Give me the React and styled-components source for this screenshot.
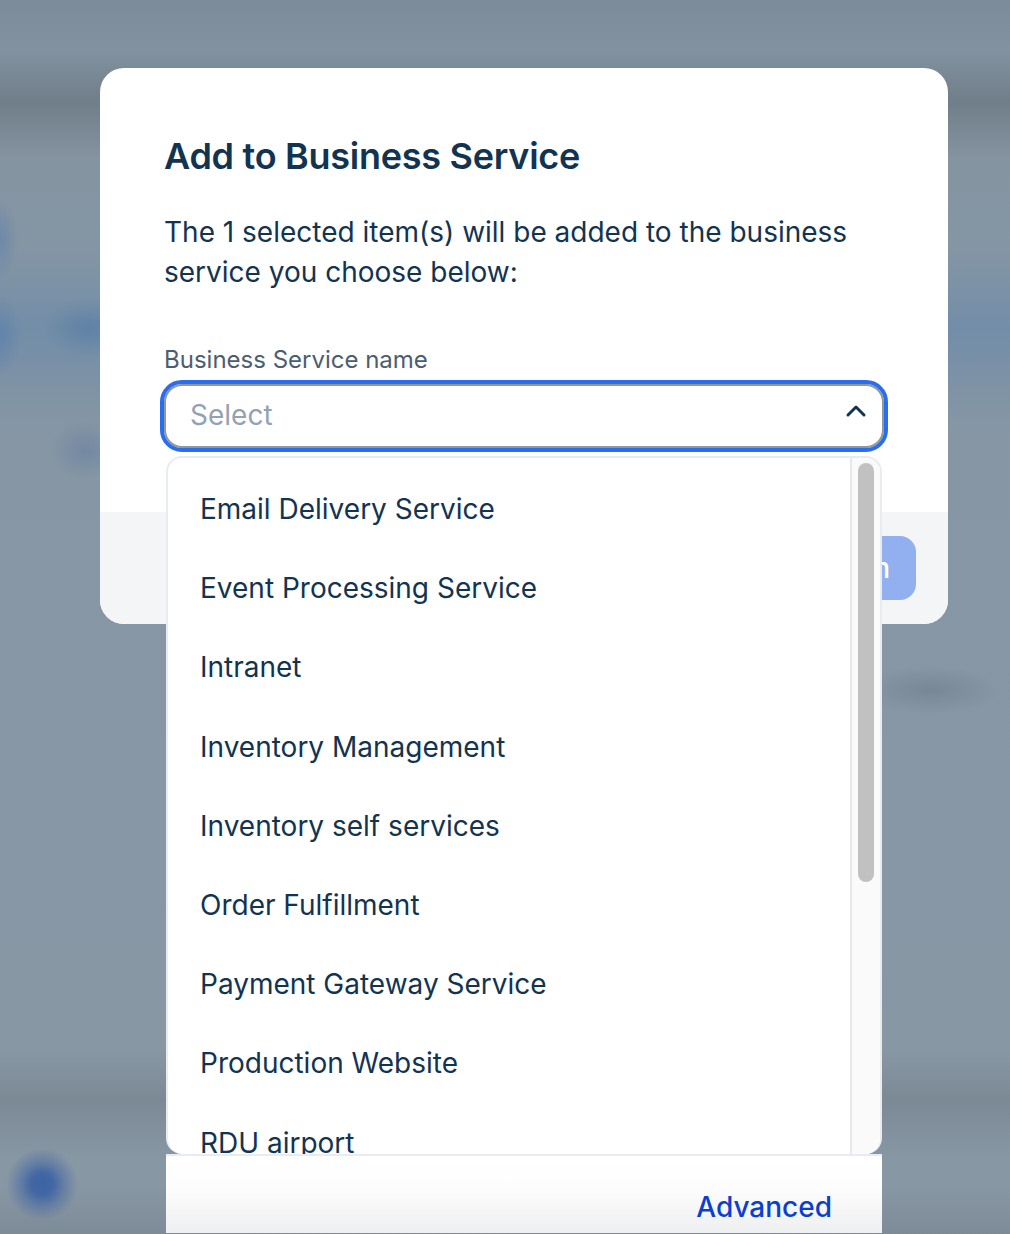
import React from 'react';
import styled, { createGlobalStyle } from 'styled-components';

const GlobalStyle = createGlobalStyle`
    html, body {
        margin: 0;
        padding: 0;
        font-family: 'Inter', 'Liberation Sans', sans-serif;
    }
`;

const Backdrop = styled.div`
    position: relative;
    width: 1010px;
    height: 1234px;
    padding-top: 68px;
    box-sizing: border-box;
    overflow: hidden;
    background-color: #8897a4;
    background-image:
        radial-gradient(circle 36px at 42px 1184px, rgba(61, 99, 163, 1) 0%, rgba(61, 99, 163, 0.92) 30%, rgba(61, 99, 163, 0.45) 62%, rgba(61, 99, 163, 0) 100%),
        radial-gradient(ellipse 70px 24px at 930px 690px, rgba(105, 120, 135, 0.5), rgba(105, 120, 135, 0)),
        radial-gradient(ellipse 44px 30px at 88px 328px, rgba(80, 120, 165, 0.55), rgba(80, 120, 165, 0)),
        radial-gradient(ellipse 36px 30px at 85px 450px, rgba(85, 115, 160, 0.4), rgba(85, 115, 160, 0)),
        radial-gradient(ellipse 18px 40px at 0px 240px, rgba(80, 120, 175, 0.45), rgba(80, 120, 175, 0)),
        radial-gradient(ellipse 22px 40px at 0px 335px, rgba(80, 120, 175, 0.5), rgba(80, 120, 175, 0)),
        linear-gradient(180deg,
            rgba(112, 130, 145, 0.55) 0,
            rgba(112, 130, 145, 0.25) 50px,
            rgba(105, 120, 130, 0.8) 102px,
            rgba(115, 130, 140, 0.15) 160px,
            rgba(100, 135, 170, 0.1) 250px,
            rgba(100, 135, 170, 0.6) 330px,
            rgba(100, 135, 170, 0.05) 430px,
            rgba(115, 130, 140, 0) 1050px,
            rgba(115, 130, 140, 0.65) 1100px,
            rgba(115, 130, 140, 0) 1160px,
            rgba(115, 130, 140, 0) 1185px,
            rgba(115, 130, 140, 0.55) 1234px);
`;

const Modal = styled.div`
    position: relative;
    width: 848px;
    margin: 0 auto 0 100px;
    border-radius: 24px;
    background: #fff;
`;

const Body = styled.div`
    height: 444px;
    box-sizing: border-box;
    padding: 64px 64px 0;
`;

const Title = styled.h2`
    margin: 0;
    font-size: 36px;
    line-height: 48px;
    font-weight: 600;
    letter-spacing: -0.27px;
    color: #123450;
`;

const Message = styled.p`
    margin: 32px 0 0;
    width: 700px;
    font-size: 28px;
    line-height: 40px;
    color: #123450;
`;

const Field = styled.div`
    position: relative;
    margin-top: 50px;
`;

const Label = styled.div`
    font-size: 24px;
    line-height: 36px;
    color: #4b5e70;
`;

const SelectBox = styled.div`
    display: flex;
    align-items: center;
    justify-content: space-between;
    margin: 2px 0 0 -4px;
    width: 728px;
    height: 72px;
    box-sizing: border-box;
    padding: 0 16px 2px 26px;
    border: 4px solid #2a6ded;
    border-radius: 22px;
    box-shadow: inset 0 0 0 2px #8f979f;
    background: #fff;
`;

const Placeholder = styled.span`
    font-size: 28px;
    color: #93a2b3;
`;

const Dropdown = styled.div`
    position: absolute;
    top: 114px;
    left: 2px;
    width: 716px;
    display: flex;
    flex-direction: column;
`;

const ListFrame = styled.div`
    display: flex;
    height: 698px;
    box-sizing: border-box;
    border: 2px solid #e8ebf0;
    border-bottom: none;
    border-radius: 16px;
    overflow: hidden;
    background: #fff;
`;

const List = styled.ul`
    flex: 1;
    margin: 0;
    padding: 12px 0 0 32px;
    list-style: none;
    overflow: hidden;
`;

const Item = styled.li`
    height: 79.2px;
    line-height: 79px;
    font-size: 28px;
    white-space: nowrap;
    color: #123450;
`;

const Track = styled.div`
    width: 30px;
    box-sizing: border-box;
    padding: 5px 6px 0;
    border-left: 2px solid #e6e8eb;
    background: #fafafa;
`;

const Thumb = styled.div`
    height: 419px;
    border-radius: 8px;
    background: #c1c1c1;
`;

const DropdownFooter = styled.div`
    display: flex;
    justify-content: flex-end;
    height: 79px;
    box-sizing: border-box;
    padding: 33px 50px 0 0;
    border-top: 2px solid #e8ebf3;
    background: linear-gradient(180deg, #fff 0%, #fdfdfd 40%, #eeeff0 100%);
`;

const AdvancedLink = styled.a`
    font-size: 28px;
    line-height: 36px;
    font-weight: 500;
    color: #0b3fd0;
`;

const Footer = styled.div`
    display: flex;
    justify-content: flex-end;
    align-items: center;
    height: 112px;
    box-sizing: border-box;
    padding: 0 32px;
    border-radius: 0 0 24px 24px;
    background: #f4f5f7;
`;

const ConfirmButton = styled.button`
    height: 64px;
    padding: 0 26px;
    border: none;
    border-radius: 16px;
    font-family: inherit;
    font-size: 28px;
    font-weight: 500;
    color: #fff;
    background: #92aff0;
`;

const services = [
    'Email Delivery Service',
    'Event Processing Service',
    'Intranet',
    'Inventory Management',
    'Inventory self services',
    'Order Fulfillment',
    'Payment Gateway Service',
    'Production Website',
    'RDU airport',
];

const App = () => {
    return (
        <Backdrop>
            <GlobalStyle />
            <Modal>
                <Body>
                    <Title>Add to Business Service</Title>
                    <Message>The 1 selected item(s) will be added to the business service you choose below:</Message>
                    <Field>
                        <Label>Business Service name</Label>
                        <SelectBox>
                            <Placeholder>Select</Placeholder>
                            <svg width="24" height="24" viewBox="0 0 24 24" fill="none" stroke="#123450" strokeWidth="3" strokeLinecap="round" strokeLinejoin="round">
                                <path d="M4 12l8-8 8 8" />
                            </svg>
                        </SelectBox>
                        <Dropdown>
                            <ListFrame>
                                <List>
                                    {services.map((name) => (
                                        <Item key={name}>{name}</Item>
                                    ))}
                                </List>
                                <Track>
                                    <Thumb />
                                </Track>
                            </ListFrame>
                            <DropdownFooter>
                                <AdvancedLink>Advanced</AdvancedLink>
                            </DropdownFooter>
                        </Dropdown>
                    </Field>
                </Body>
                <Footer>
                    <ConfirmButton>Confirm</ConfirmButton>
                </Footer>
            </Modal>
        </Backdrop>
    );
};

export default App;
